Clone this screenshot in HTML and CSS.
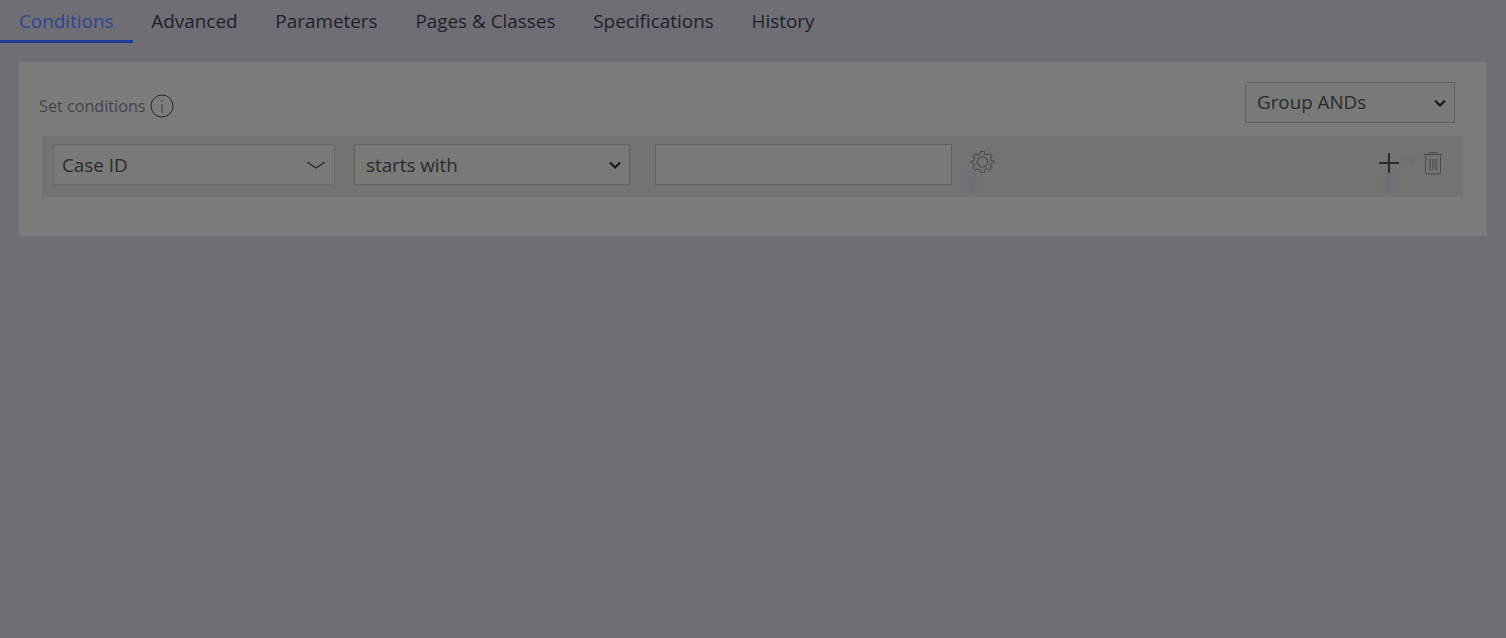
FILE: index.html
```html
<!DOCTYPE html>
<html lang="en">
<head>
<meta charset="utf-8">
<title>Conditions</title>
<link rel="stylesheet" href="styles.css">
</head>
<body>
<nav class="tabs">
  <a class="tab active">Conditions</a>
  <a class="tab">Advanced</a>
  <a class="tab">Parameters</a>
  <a class="tab">Pages &amp; Classes</a>
  <a class="tab">Specifications</a>
  <a class="tab">History</a>
</nav>
<section class="panel">
  <div class="panel-head">
    <div class="set-label">
      <span>Set conditions</span>
      <svg class="info" width="24" height="24" viewBox="0 0 24 24" fill="none">
        <circle cx="12" cy="12" r="11" stroke="#24242c" stroke-width="1"/>
        <path d="M12 10v9" stroke="#3a3a42" stroke-width="1"/>
        <path d="M12 6v1.600" stroke="#3a3a42" stroke-width="1.200"/>
      </svg>
    </div>
    <div class="select group-select">
      <span>Group ANDs</span>
      <svg class="chev" width="12" height="8" viewBox="0 0 12 8" fill="none"><path d="M1 1.500l5 5 5-5" stroke="#14141c" stroke-width="2"/></svg>
    </div>
  </div>
  <div class="cond-row">
    <div class="select field-select">
      <span>Case ID</span>
      <svg class="chev-thin" width="20" height="10" viewBox="0 0 20 10" fill="none"><path d="M1 2l9 6 9-6" stroke="#2a2a32" stroke-width="1.400"/></svg>
    </div>
    <div class="select op-select">
      <span>starts with</span>
      <svg class="chev" width="12" height="8" viewBox="0 0 12 8" fill="none"><path d="M1 1.500l5 5 5-5" stroke="#14141c" stroke-width="2"/></svg>
    </div>
    <div class="value-input"></div>
    <svg class="gear" width="25" height="26" viewBox="0 0 26 26" fill="none" stroke="#494952" stroke-width="1.100">
      <circle cx="13" cy="13" r="5.500"/>
      <path d="M11 1.500h4l.7 3.100 2.200.9 2.700-1.700 2.800 2.800-1.700 2.700.9 2.200 3.100.7v1.600l-3.100.7-.9 2.200 1.700 2.700-2.800 2.800-2.700-1.700-2.200.9-.7 3.100h-4l-.7-3.100-2.200-.9-2.700 1.700-2.800-2.800 1.700-2.700-.9-2.200-3.100-.7v-1.600l3.100-.7.9-2.200-1.700-2.700 2.800-2.800 2.700 1.700 2.200-.9z" transform="translate(.6 .6) scale(.95)"/>
    </svg>
    <div class="actions">
      <svg width="22" height="22" viewBox="0 0 22 22" fill="none"><path d="M11 1v20M1 11h20" stroke="#2a2a32" stroke-width="2"/></svg>
      <svg width="20" height="24" viewBox="0 0 20 24" fill="none" stroke="#4a4a53" stroke-width="1">
        <path d="M.5 3.500h19M6 3.500V1.500h8v2M2.500 3.500v18a1.500 1.500 0 0 0 1.500 1.500h12a1.500 1.500 0 0 0 1.500-1.500v-18"/>
        <path d="M7 8v11M10 8v11M13 8v11" stroke-width="1.200"/>
      </svg>
    </div>
    <span class="ghost ghost-gear"></span>
    <span class="ghost ghost-plus"></span>
    <span class="ghost ghost-side"></span>
  </div>
</section>
</body>
</html>
```
FILE: styles.css
```css
* { box-sizing: border-box; }
html, body { height: 100%; }
body {
  margin: 0;
  background: #6f6e75;
  font-family: "Open Sans", sans-serif;
  color: #24242c;
  overflow: hidden;
}
.tabs {
  display: flex;
  height: 43px;
}
.tab {
  padding: 8px 18.900px 0;
  font-size: 18.900px;
  line-height: 26px;
  color: #21212a;
  border-bottom: 3px solid transparent;
}
.tab.active {
  padding-right: 19.400px;
  margin-right: -.5px;
  color: #2c4593;
  border-bottom-color: #1f3d96;
}
.panel {
  margin: 19px 19px 0;
  height: 174px;
  background: #7c7c7a;
  padding: 20px 24px 0 20px;
}
.panel-head {
  display: flex;
  justify-content: space-between;
  align-items: center;
  height: 41px;
  padding-right: 8px;
}
.set-label {
  display: flex;
  align-items: center;
  gap: 4px;
  font-size: 16.200px;
  color: #44444c;
  padding-top: 6px;
}
.info { width: 24px; height: 24px; }
.select {
  display: flex;
  align-items: center;
  justify-content: space-between;
  height: 41px;
  border: 1px solid #5f5f64;
  font-size: 18.800px;
  line-height: 24px;
  color: #2a2a33;
  background: #797977;
}
.group-select { width: 210px; padding: 0 8px 2px 11px; }
.group-select .chev { margin-top: 2px; }
.cond-row {
  position: relative;
  display: flex;
  align-items: flex-start;
  height: 61px;
  margin: 13px 0 0 3px;
  padding: 8px 20px 0 11px;
  background: #737372;
}
.field-select {
  width: 282px;
  padding: 0 8px 0 8px;
  border-color: #66666b;
  border-radius: 2px;
}
.op-select {
  width: 276px;
  margin-left: 19px;
  padding: 0 8px 0 11px;
}
.value-input {
  width: 297px;
  height: 41px;
  margin-left: 25px;
  border: 1px solid #5f5f64;
  background: #797977;
}
.gear { margin: 5px 0 0 18px; }
.actions {
  display: flex;
  gap: 23px;
  margin: 7px 0 0 auto;
  align-items: center;
}
.ghost {
  position: absolute;
  background: #6b6b7c;
  opacity: .55;
  filter: blur(1.500px);
}
.ghost-gear { left: 926px; top: 34px; width: 7px; height: 22px; }
.ghost-plus { left: 1342px; top: 38px; width: 9px; height: 18px; }
.ghost-side { left: 1363px; top: 22px; width: 9px; height: 9px; }
```
